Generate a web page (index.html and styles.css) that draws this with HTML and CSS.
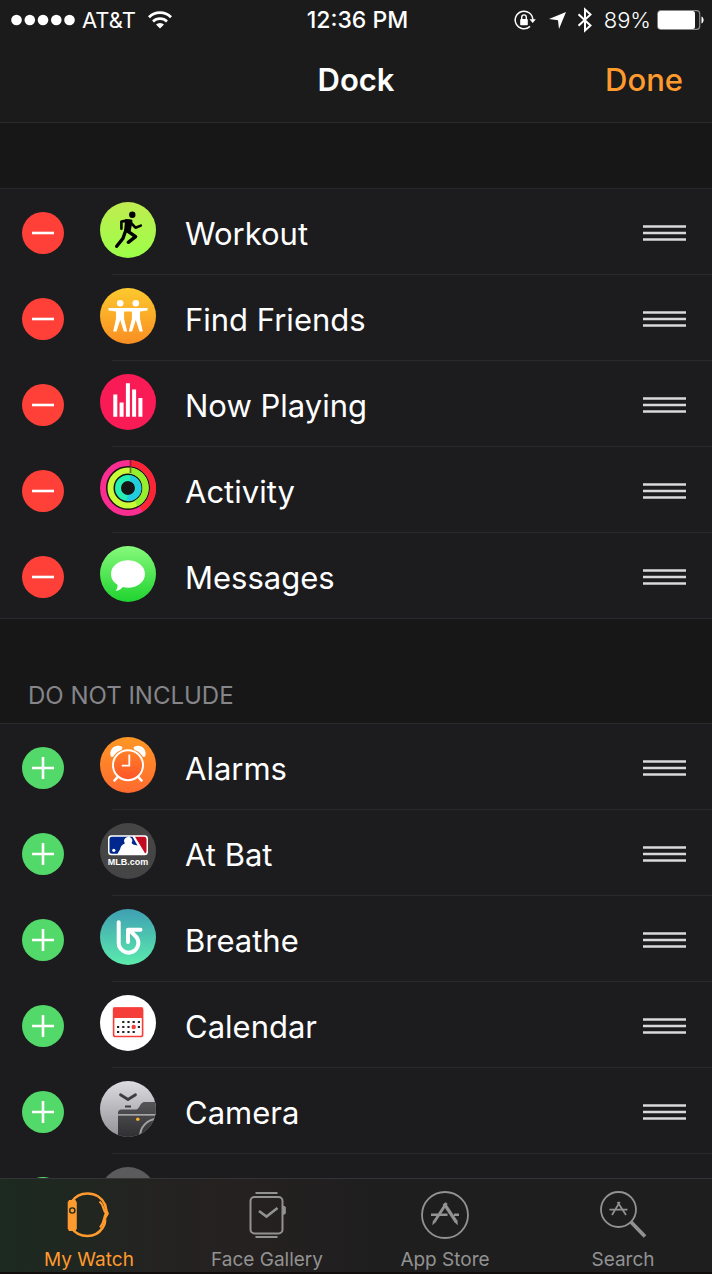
FILE: index.html
```html
<!DOCTYPE html>
<html lang="en">
<head>
<meta charset="utf-8">
<meta name="viewport" content="width=device-width, initial-scale=1">
<title>Dock</title>
<link rel="stylesheet" href="styles.css">
</head>
<body>
<svg class="sprite" aria-hidden="true">
  <defs>
    <symbol id="minus" viewBox="0 0 42 42"><circle cx="21" cy="21" r="21" fill="#ff4039"/><path d="M10 21h22" stroke="#fff" stroke-width="2.6"/></symbol>
    <symbol id="plus" viewBox="0 0 42 42"><circle cx="21" cy="21" r="21" fill="#53d86a"/><path d="M10 21h22M21 10v22" stroke="#fff" stroke-width="2.6"/></symbol>
    <symbol id="grip" viewBox="0 0 43 16"><path d="M0 1.5h43M0 8h43M0 14.5h43" stroke="#d9d9dc" stroke-width="2.3"/></symbol>
    <linearGradient id="g-workout" x2="0" y2="1"><stop stop-color="#c0ec50"/><stop offset="1" stop-color="#9cff48"/></linearGradient>
    <linearGradient id="g-friends" x2="0" y2="1"><stop stop-color="#fdc92e"/><stop offset="1" stop-color="#f98e22"/></linearGradient>
    <linearGradient id="g-messages" x2="0" y2="1"><stop stop-color="#87fa7c"/><stop offset="1" stop-color="#1fd32f"/></linearGradient>
    <linearGradient id="g-alarm" x2="0" y2="1"><stop stop-color="#ff9724"/><stop offset="1" stop-color="#ff6a30"/></linearGradient>
    <linearGradient id="g-face" x2="0" y2="1"><stop stop-color="#ff8128"/><stop offset="1" stop-color="#ff5429"/></linearGradient>
    <linearGradient id="g-breathe" x2="0" y2="1"><stop stop-color="#3f9fb3"/><stop offset="1" stop-color="#5cebad"/></linearGradient>
    <linearGradient id="g-camera" x2="0" y2="1"><stop stop-color="#dcdce0"/><stop offset="1" stop-color="#929297"/></linearGradient>
    <linearGradient id="g-body" x2="0" y2="1"><stop stop-color="#555558"/><stop offset="1" stop-color="#303032"/></linearGradient>
    <clipPath id="disc"><circle cx="28" cy="28" r="28"/></clipPath>
  </defs>
</svg>

<div class="app">
  <header class="top">
    <div class="status">
      <div class="status-side">
        <svg class="signal" viewBox="0 0 64 12" fill="#fff"><circle cx="5.5" cy="6" r="5.3"/><circle cx="18.8" cy="6" r="5.3"/><circle cx="32" cy="6" r="5.3"/><circle cx="45.3" cy="6" r="5.3"/><circle cx="58.5" cy="6" r="5.3"/></svg>
        <span class="carrier">AT&amp;T</span>
        <svg class="wifi" viewBox="0 0 24 18" fill="none" stroke="#fff"><path d="M1 6.2a15.5 15.5 0 0 1 22 0" stroke-width="2.8"/><path d="M5 10.5a10 10 0 0 1 14 0" stroke-width="2.6"/><path d="M12 17.5 8 13.6a5.8 5.8 0 0 1 8 0z" fill="#fff" stroke="none"/></svg>
      </div>
      <time class="clock">12:36 PM</time>
      <div class="status-side status-right">
        <svg class="lock" viewBox="0 0 22 20" fill="none" stroke="#fff"><path d="M18.8 10A8.8 8.8 0 1 0 16 16.4" stroke-width="1.5"/><path d="M15.5 9.2h6.3l-3.1 3.9z" fill="#fff" stroke="none"/><rect x="6.2" y="9" width="7.6" height="6.2" rx=".8" fill="#fff" stroke="none"/><path d="M7.700 9.400V7.200a2.300 2.300 0 0 1 4.600 0v2.200" stroke-width="1.4"/></svg>
        <svg class="arrow" viewBox="0 0 17 17" fill="#fff"><path d="M17 0 10 17 9 8.300 0 7z"/></svg>
        <svg class="bluetooth" viewBox="0 0 16 26" fill="none" stroke="#fff" stroke-width="2"><path d="m1.500 7.200 12 11.200L8 23.400V2.600l5.500 5L1.500 18.800"/></svg>
        <span class="percent">89%</span>
        <svg class="battery" viewBox="0 0 47 20"><rect x=".7" y=".7" width="42" height="18.6" rx="3" fill="none" stroke="#8a8a8a" stroke-width="1.2"/><rect x="1" y="1" width="37" height="18" rx="2.5" fill="#fff"/><path d="M44.500 6.500c2.800 1.200 2.800 5.800 0 7z" fill="#fff"/></svg>
      </div>
    </div>
    <div class="nav">
      <h1 class="title">Dock</h1>
      <button class="done" type="button">Done</button>
    </div>
  </header>

  <main class="content">
    <ul class="group">
      <li class="row">
        <button class="toggle" type="button" aria-label="Remove Workout"><svg><use href="#minus"/></svg></button>
        <svg class="icon" viewBox="0 0 56 56"><circle cx="28" cy="28" r="28" fill="url(#g-workout)"/><circle cx="32.3" cy="12.7" r="3.2"/><path d="M21.400 26.800v-7.200l5.500-1 4.300.3M31.500 21.500l4 4.200 5.300-2.100" fill="none" stroke="#000" stroke-width="2.6" stroke-linecap="round" stroke-linejoin="round"/><path d="M25 17.600c3.400-1 6.800.4 7.300 3L30.500 30l-6.300-1.300z"/><path d="m26.300 27-3.400 9.500-6.200 7.800M28 29.300l7.600 5.300-7.300 5.700" fill="none" stroke="#000" stroke-width="3.4" stroke-linecap="round" stroke-linejoin="round"/></svg>
        <span class="name">Workout</span>
        <button class="handle" type="button" aria-label="Reorder Workout"><svg><use href="#grip"/></svg></button>
      </li>
      <li class="row">
        <button class="toggle" type="button" aria-label="Remove Find Friends"><svg><use href="#minus"/></svg></button>
        <svg class="icon" viewBox="0 0 56 56"><circle cx="28" cy="28" r="28" fill="url(#g-friends)"/><g fill="#fff"><circle cx="20.2" cy="15.3" r="3.3"/><circle cx="35.8" cy="15.3" r="3.3"/><path d="M8.500 20h39v2.600l-7.500.8v7.300l2.800 12.800h-3.300L35.800 32l-3.700 11.500h-3.300l3.100-12.800v-7.200h-7.800v7.200l3.100 12.800h-3.300L20.200 32l-3.700 11.500h-3.300L16 30.700v-7.300l-7.500-.8z"/></g></svg>
        <span class="name">Find Friends</span>
        <button class="handle" type="button" aria-label="Reorder Find Friends"><svg><use href="#grip"/></svg></button>
      </li>
      <li class="row">
        <button class="toggle" type="button" aria-label="Remove Now Playing"><svg><use href="#minus"/></svg></button>
        <svg class="icon" viewBox="0 0 56 56"><circle cx="28" cy="28" r="28" fill="#f91b56"/><path d="M13.300 20.400h4v22.400h-4zM19.600 28.400h4v14.400h-4zM25.900 9.200h4v33.600h-4zM32.100 15.600h4v27.200h-4zM38.400 24h4v18.800h-4z" fill="#fff"/></svg>
        <span class="name">Now Playing</span>
        <button class="handle" type="button" aria-label="Reorder Now Playing"><svg><use href="#grip"/></svg></button>
      </li>
      <li class="row">
        <button class="toggle" type="button" aria-label="Remove Activity"><svg><use href="#minus"/></svg></button>
        <svg class="icon" viewBox="0 0 56 56" fill="none"><circle cx="28" cy="28" r="28" fill="#151515"/><g stroke-width="6"><circle cx="28" cy="28" r="25" stroke="#fb2d91"/><path d="M30 3a25 25 0 0 1 11 46.300" stroke="#fb2635"/><circle cx="28" cy="28" r="17.5" stroke="#c9fb38"/><path d="M30 10.500a17.500 17.500 0 0 1 6 33.100" stroke="#94ef2c"/><circle cx="28" cy="28" r="10" stroke="#25efb3"/><path d="M30 18.200a10 10 0 0 1-3 19.800" stroke="#22cde0"/></g><path d="M30.500 0v6M30.500 8v5" stroke="#501b28" stroke-opacity=".6" stroke-width="1.800"/></svg>
        <span class="name">Activity</span>
        <button class="handle" type="button" aria-label="Reorder Activity"><svg><use href="#grip"/></svg></button>
      </li>
      <li class="row">
        <button class="toggle" type="button" aria-label="Remove Messages"><svg><use href="#minus"/></svg></button>
        <svg class="icon" viewBox="0 0 56 56"><circle cx="28" cy="28" r="28" fill="url(#g-messages)"/><path d="M28 14.300c9.500 0 17 6 17 13.700s-7.500 13.700-17 13.700c-1.800 0-3.500-.2-5.200-.6-1.900 2.400-4.300 3.800-7.300 3.700 1.700-1.700 2.300-3.800 2-6C13.500 36.300 11 32.500 11 28c0-7.700 7.500-13.700 17-13.700z" fill="#fff"/></svg>
        <span class="name">Messages</span>
        <button class="handle" type="button" aria-label="Reorder Messages"><svg><use href="#grip"/></svg></button>
      </li>
    </ul>

    <h2 class="section-title">DO NOT INCLUDE</h2>
    <ul class="group">
      <li class="row">
        <button class="toggle" type="button" aria-label="Add Alarms"><svg><use href="#plus"/></svg></button>
        <svg class="icon" viewBox="0 0 56 56"><circle cx="28" cy="28" r="28" fill="url(#g-alarm)"/><g fill="none" stroke="#fff"><circle cx="28" cy="28.2" r="15" fill="url(#g-face)" stroke-width="2"/><path d="M29.300 17.500v11.200h-7.500" stroke-width="1.8"/><path d="m17.800 39.800-3.300 3.700M38.200 39.800l3.300 3.700" stroke-width="2.6" stroke-linecap="round"/></g><path d="M10.800 19.500c-2.600-7.500 5.500-13.500 11.700-9.300l-.8 2.600c-4 1.500-7 4-8.600 7.200zM45.200 19.500c2.600-7.500-5.500-13.500-11.700-9.300l.8 2.600c4 1.500 7 4 8.600 7.200z" fill="#fff"/></svg>
        <span class="name">Alarms</span>
        <button class="handle" type="button" aria-label="Reorder Alarms"><svg><use href="#grip"/></svg></button>
      </li>
      <li class="row">
        <button class="toggle" type="button" aria-label="Add At Bat"><svg><use href="#plus"/></svg></button>
        <svg class="icon" viewBox="0 0 56 56"><circle cx="28" cy="28" r="28" fill="#454546"/><rect x="8" y="12.3" width="40" height="20" rx="3.5" fill="#fff"/><path d="M12 13.800h17c-3.500.3-5 2-5 4.200l.8 2.500c-2.800 1-4.300 3-4.800 6l-2.500 4.300H12a2.500 2.500 0 0 1-2.500-2.500v-12a2.500 2.500 0 0 1 2.500-2.500z" fill="#00278e"/><path d="M35 13.800h9a2.500 2.500 0 0 1 2.500 2.500v12a2.500 2.500 0 0 1-1.300 2.200z" fill="#c40a20"/><path d="M29 13.800h3.500l5 8.700-3.500-.7c-1.500-.5-2.500-1.200-2.300-2 1.500-2.600.3-5-2.700-6z" fill="#00278e"/><circle cx="13.800" cy="27.3" r="1.600" fill="#fff"/><text class="mlb" x="28" y="41.5" text-anchor="middle">MLB.com</text></svg>
        <span class="name">At Bat</span>
        <button class="handle" type="button" aria-label="Reorder At Bat"><svg><use href="#grip"/></svg></button>
      </li>
      <li class="row">
        <button class="toggle" type="button" aria-label="Add Breathe"><svg><use href="#plus"/></svg></button>
        <svg class="icon" viewBox="0 0 56 56"><circle cx="28" cy="28" r="28" fill="url(#g-breathe)"/><path d="M18.700 13.300v20.500a9.800 9.800 0 1 0 17.700-5.800L29.500 21" fill="none" stroke="#fff" stroke-width="4" stroke-linecap="round"/><path d="M40.500 20.700H28V33" fill="none" stroke="#fff" stroke-width="4" stroke-linecap="round" stroke-linejoin="round"/></svg>
        <span class="name">Breathe</span>
        <button class="handle" type="button" aria-label="Reorder Breathe"><svg><use href="#grip"/></svg></button>
      </li>
      <li class="row">
        <button class="toggle" type="button" aria-label="Add Calendar"><svg><use href="#plus"/></svg></button>
        <svg class="icon" viewBox="0 0 56 56"><circle cx="28" cy="28" r="28" fill="#fff"/><rect x="13.6" y="13" width="29" height="28.5" rx="1.8" fill="#fff" stroke="#f53e3a" stroke-width="1.6"/><path d="M13 12.500h30V23H13z" fill="#f53e3a"/><path d="M22.200 27h18M17 32h23M17 37h18" stroke="#222" stroke-width="2.2" stroke-dasharray="2.200 3"/><circle cx="33.7" cy="32" r="2.2" fill="#f53e3a"/></svg>
        <span class="name">Calendar</span>
        <button class="handle" type="button" aria-label="Reorder Calendar"><svg><use href="#grip"/></svg></button>
      </li>
      <li class="row">
        <button class="toggle" type="button" aria-label="Add Camera"><svg><use href="#plus"/></svg></button>
        <svg class="icon" viewBox="0 0 56 56"><g clip-path="url(#disc)"><path d="M0 0h56v56H0z" fill="url(#g-camera)"/><path d="M18 56V32q0-3.500 3.500-3.500H36c3.500 0 4-7.500 8.500-7.500H56v35z" fill="url(#g-body)"/><path d="M18 33.800h38" stroke="#c6c6c9" stroke-width="1.3"/><path d="M40 56c0-10 7-17.500 17-18" fill="none" stroke="#a0a0a3" stroke-width="2"/><circle cx="37.8" cy="38.3" r="1.7" fill="#fdb327"/></g><path d="m20.500 13.800 7.500 4.700 7.500-4.700" fill="none" stroke="#3d3d41" stroke-width="2.8" stroke-linecap="round" stroke-linejoin="round"/><path d="M25 25.500h6" stroke="#3d3d41" stroke-width="2"/></svg>
        <span class="name">Camera</span>
        <button class="handle" type="button" aria-label="Reorder Camera"><svg><use href="#grip"/></svg></button>
      </li>
      <li class="row">
        <button class="toggle" type="button" aria-label="Add app"><svg><use href="#plus"/></svg></button>
        <svg class="icon" viewBox="0 0 56 56"><circle cx="28" cy="28" r="28" fill="#5b5b5d"/></svg>
      </li>
    </ul>
  </main>

  <nav class="tabs" aria-label="Sections">
    <a class="tab tab-active" href="#watch" aria-current="page">
      <svg class="tab-icon" viewBox="0 0 48 48" fill="none" stroke="currentColor"><path d="M6.500 11C10 5.500 16 2.500 22.500 2.500 30.500 2.500 37 7 40 13.500c1 3.200.8 6 2.500 9-1 2.500-2.800 3.500-2.500 6 .5 3.200-.5 5.500-2.500 8.500-3.500 5.200-9 8-15 8-6.500 0-12.500-3-16-8" stroke-width="2.600"/><path d="M34.500 10.500c4.500 3.500 3 8 6.500 12-2.500 3-1 8.500-6 14" stroke-width="2.200"/><path d="M2.700 11.500 4 9h6.500l1.300 2.500v26L10.500 40H4l-1.300-2.500z" fill="currentColor" stroke="none"/><circle cx="7.300" cy="19.500" r="2.600" stroke="#1d2a20" stroke-width="1.400"/></svg>
      <span>My Watch</span>
    </a>
    <a class="tab" href="#gallery">
      <svg class="tab-icon" viewBox="0 0 48 48" fill="none" stroke="currentColor"><rect x="7.500" y="6" width="32" height="36.500" rx="4" stroke-width="2"/><path d="M12.500 2h22M12.500 46h22" stroke-width="1.800"/><path d="M40.500 15v8.500l1.800-1v-6.500z" fill="currentColor"/><path d="m16 20 7.500 5.500L34.500 17" stroke-width="2.600"/></svg>
      <span>Face Gallery</span>
    </a>
    <a class="tab" href="#store">
      <svg class="tab-icon" viewBox="0 0 48 48" fill="none" stroke="currentColor"><circle cx="24" cy="24" r="23" stroke-width="1.800"/><path d="M10 23.800h16.500M33 23.800h5" stroke-width="2.600"/><path d="m25.500 12-12 18.500" stroke-width="2.800"/><path d="m23 12.500 12 18" stroke-width="3.200"/><path d="m12 29.200 3 1.800-3.800 3.200zM33.200 31l3.200-2 .5 5.200z" fill="currentColor" stroke="none"/></svg>
      <span>App Store</span>
    </a>
    <a class="tab" href="#search">
      <svg class="tab-icon" viewBox="0 0 48 48" fill="none" stroke="currentColor"><circle cx="19.500" cy="18.500" r="17.500" stroke-width="1.800"/><path d="M10.500 18.700h18M20.800 11 13 24M18.500 11l8.500 13" stroke-width="1.700"/><path d="m32 31 14 14.500" stroke-width="3.800"/></svg>
      <span>Search</span>
    </a>
  </nav>
</div>
</body>
</html>
```
FILE: styles.css
```css
* {
  box-sizing: border-box;
}

body {
  margin: 0;
  background: #171717;
  color: #fff;
  font-family: Inter, "Liberation Sans", sans-serif;
}

button {
  padding: 0;
  border: 0;
  background: none;
  color: inherit;
  font: inherit;
  cursor: pointer;
}

svg {
  display: block;
  flex: none;
}

.sprite {
  position: absolute;
  width: 0;
  height: 0;
}

.app {
  display: flex;
  flex-direction: column;
  height: 100vh;
}

.top {
  flex: none;
  background: #1b1b1b;
  border-bottom: 1px solid #2a2a2a;
}

.status {
  display: grid;
  grid-template-columns: 1fr auto 1fr;
  align-items: center;
  height: 40px;
  padding: 0 8px 0 11px;
  font-size: 22px;
}

.status-side {
  display: flex;
  align-items: center;
}

.status-right {
  justify-content: flex-end;
}

.signal {
  width: 64px;
  height: 12px;
}

.carrier {
  margin: 0 12px 0 7px;
}

.wifi {
  width: 24px;
  height: 18px;
}

.clock {
  font-size: 23px;
  font-weight: 500;
}

.lock {
  width: 22px;
  height: 20px;
}

.arrow {
  width: 17px;
  height: 17px;
  margin-left: 13px;
}

.bluetooth {
  width: 16px;
  height: 26px;
  margin: 0 11px;
}

.percent {
  margin-right: 6px;
  font-weight: 300;
}

.battery {
  width: 47px;
  height: 20px;
}

.nav {
  display: grid;
  grid-template-columns: 1fr auto 1fr;
  align-items: center;
  height: 82px;
  padding: 0 29px 3px;
}

.title {
  grid-column: 2;
  margin: 0;
  font-size: 31px;
  font-weight: 600;
}

.done {
  justify-self: end;
  color: #ff9a2e;
  font-size: 31px;
  font-weight: 500;
}

.content {
  flex: 1;
  min-height: 0;
  padding-top: 65px;
  overflow: hidden;
}

.group {
  margin: 0;
  padding: 0;
  list-style: none;
  background: #1c1c1f;
  border-top: 1px solid #29292b;
}

.row {
  display: flex;
  align-items: center;
  height: 86px;
  padding: 2px 26px 0 22px;
  background: linear-gradient(#2a2a2d, #2a2a2d) 112px 100% / 100% 1px no-repeat;
}

.row:last-child {
  background-position: 0 100%;
}

.toggle,
.toggle svg {
  width: 42px;
  height: 42px;
}

.icon {
  width: 56px;
  height: 56px;
  margin: 0 29px 6px 36px;
}

.name {
  flex: 1;
  padding-top: 2px;
  font-size: 31px;
  font-weight: 400;
  line-height: 40px;
}

.handle,
.handle svg {
  width: 43px;
  height: 16px;
}

.mlb {
  fill: #fff;
  font: bold 9px "Liberation Sans", sans-serif;
}

.section-title {
  margin: 0;
  padding: 62px 28px 12px;
  color: #85858a;
  font-size: 24px;
  font-weight: 400;
  line-height: 30px;
}

.tabs {
  display: grid;
  grid-template-columns: repeat(4, 1fr);
  flex: none;
  height: 96px;
  border-top: 1px solid #343436;
  border-bottom: 2px solid #120d0d;
  background: linear-gradient(90deg, #1c2a20 0, #242321 22%, #252120 34%, #1f1e1f 52%, #1e1e1f 100%);
}

.tab {
  display: flex;
  flex-direction: column;
  align-items: center;
  padding-top: 12px;
  color: #929292;
  font-size: 19px;
  line-height: 24px;
  text-decoration: none;
}

.tab-active {
  color: #ff9a2e;
}

.tab-icon {
  width: 48px;
  height: 48px;
  margin-bottom: 9px;
}
```
